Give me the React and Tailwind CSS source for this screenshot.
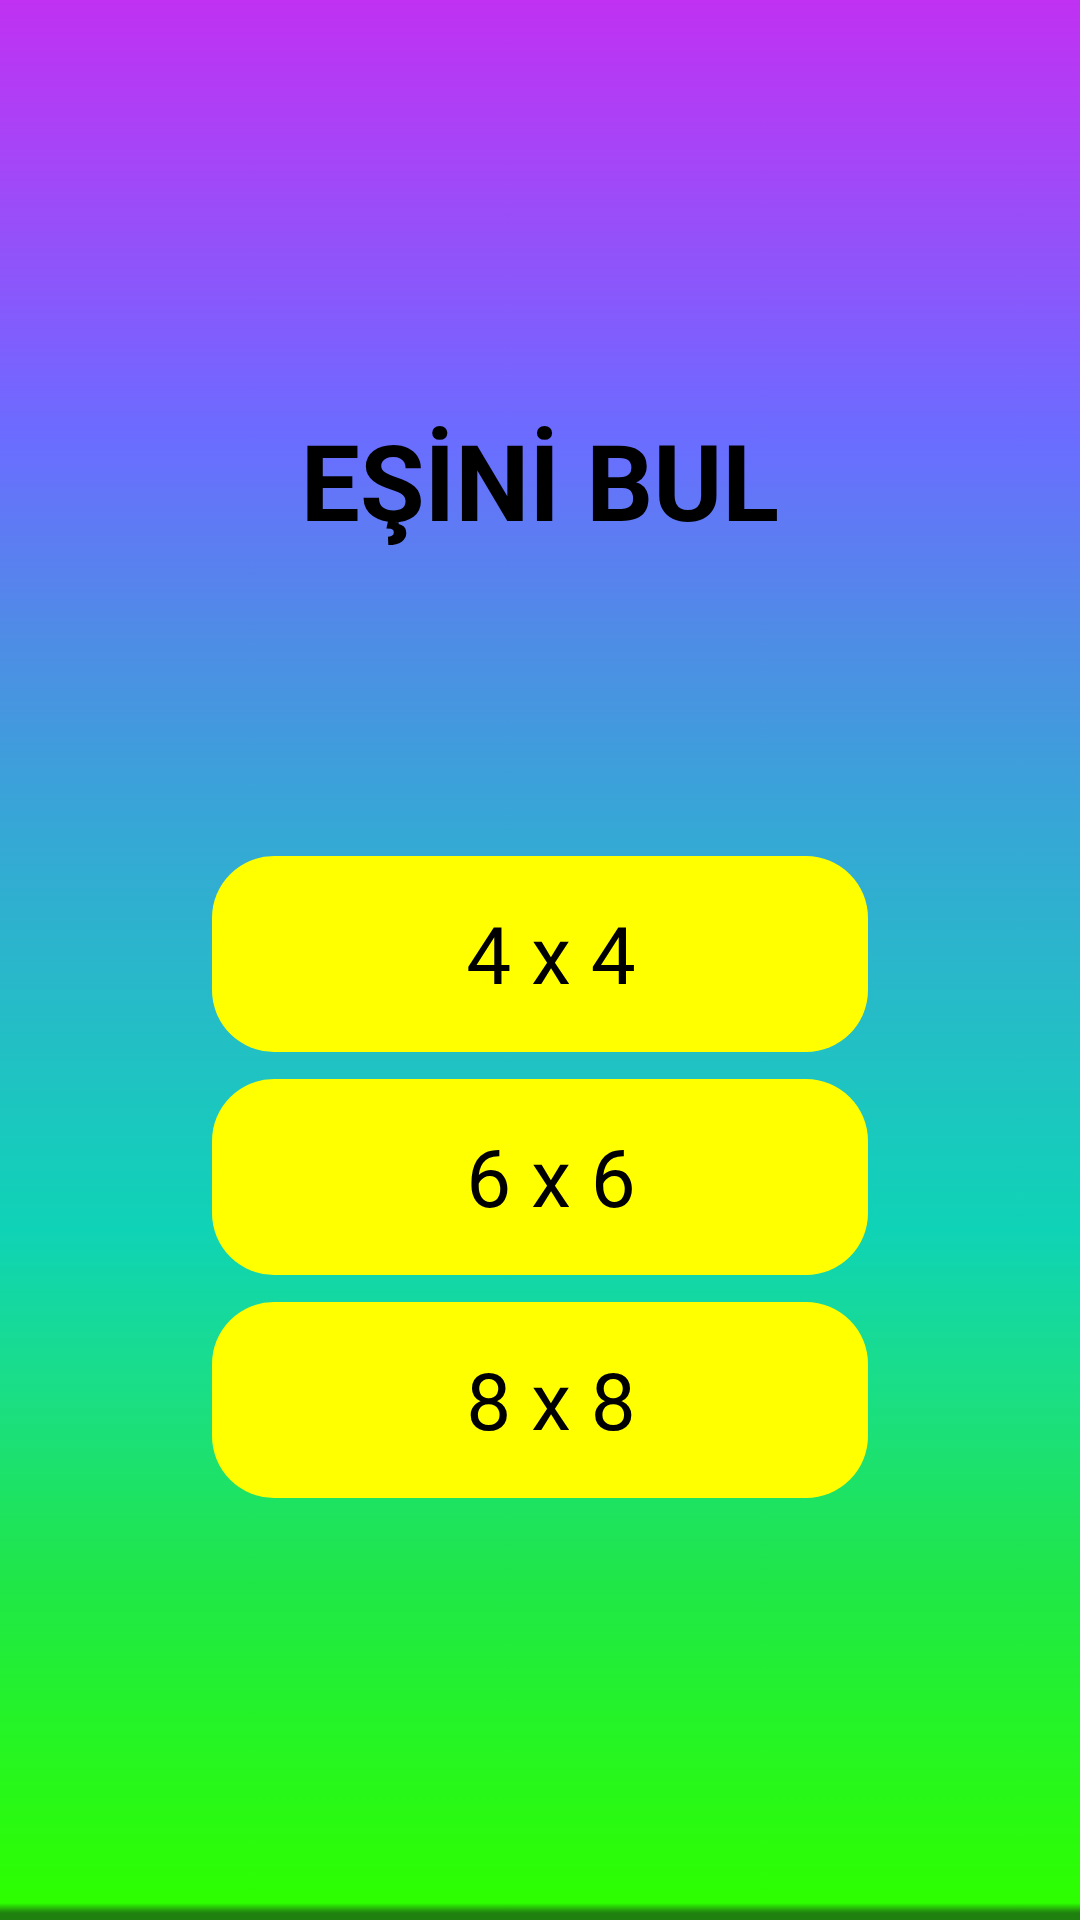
import React from 'react';

const sizes = ["4 x 4", "6 x 6", "8 x 8"];

const App = () => {
  return (
    <div
      className="relative w-[1080px] h-[1920px] overflow-hidden flex flex-col items-center bg-[linear-gradient(180deg,#c031f2_0%,#a645f7_8%,#7e5ffd_18%,#6a6dff_23%,#4f8ce6_33%,#36a7d6_43%,#1fc3c2_56%,#0fd3b6_64%,#1ade88_72%,#1fe64a_82%,#25f426_90%,#2dff00_99%)]"
      style={{ fontFamily: 'Roboto, "Liberation Sans", sans-serif' }}
    >
      <h1 className="pt-[433px] text-[105px] leading-none font-bold text-black">
        EŞİNİ BUL
      </h1>

      <div className="mt-[318px] flex flex-col gap-[27px]">
        {sizes.map((s) => (
          <button
            key={s}
            className="w-[656px] h-[196px] rounded-[62px] bg-[#ffff00] flex items-center justify-center pl-[22px] pt-[5px] text-[80px] leading-none font-normal text-black"
          >
            {s}
          </button>
        ))}
      </div>

      <div className="absolute bottom-0 left-0 w-full h-[17px] bg-[linear-gradient(180deg,rgba(31,127,15,0)_0%,rgba(31,127,15,0.8)_45%,#1f7f0f_60%)]" />
    </div>
  );
};

export default App;
